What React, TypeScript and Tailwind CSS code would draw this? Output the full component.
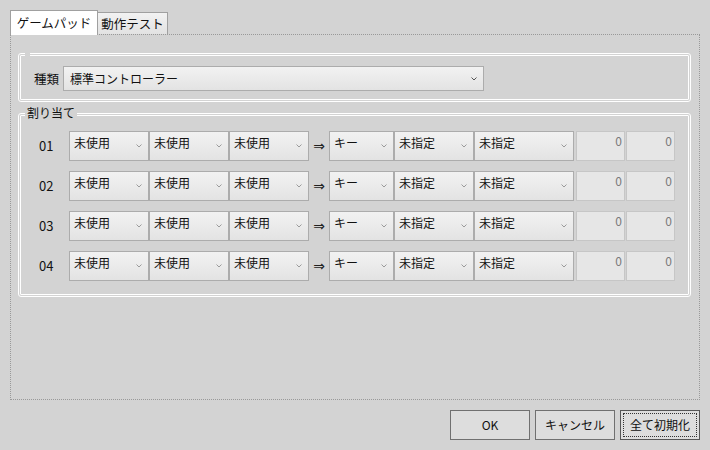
import React from "react";

const FONT = { fontFamily: '"Noto Sans CJK JP", "Noto Sans", sans-serif' };

function Chevron({ dark = false }: { dark?: boolean }) {
  return (
    <svg width="6" height="4" viewBox="0 0 6 4" className="shrink-0">
      <polyline
        points="0.5,0.5 3,3 5.5,0.5"
        fill="none"
        stroke={dark ? "#555555" : "#9a9a9a"}
        strokeWidth="1"
      />
    </svg>
  );
}

function Select({ label, w }: { label: string; w: string }) {
  return (
    <div
      className={`${w} h-[30px] shrink-0 flex items-start justify-between border border-[#acacac] bg-linear-to-b from-[#f2f2f2] to-[#e3e3e3] pl-[4px] pr-[6px]`}
    >
      <span className="pt-[3px] text-[12px] leading-[16px] text-[#111]">{label}</span>
      <span className="self-center">
        <Chevron />
      </span>
    </div>
  );
}

function NumBox() {
  return (
    <div className="w-[49px] h-[30px] shrink-0 ml-[1px] border border-[#c6c6c6] bg-[#e6e6e6] flex justify-end items-start pr-[2px] pt-[1px]">
      <span className="text-[12px] leading-[16px] text-[#7a7a7a]">0</span>
    </div>
  );
}

function Row({ n }: { n: string }) {
  return (
    <div className="flex items-center h-[30px]">
      <div className="w-[30px] text-[13px] leading-[16px] text-[#111]">{n}</div>
      <Select label="未使用" w="w-[80px]" />
      <Select label="未使用" w="w-[80px]" />
      <Select label="未使用" w="w-[80px]" />
      <div
        className="w-[20px] flex justify-center text-[14px] leading-[16px] text-[#222]"
        style={{ fontFamily: '"DejaVu Sans", sans-serif' }}
      >
        ⇒
      </div>
      <Select label="キー" w="w-[65px]" />
      <Select label="未指定" w="w-[80px]" />
      <Select label="未指定" w="w-[100px]" />
      <div className="w-[1px]" />
      <NumBox />
      <NumBox />
    </div>
  );
}

function Button({ label, focused = false }: { label: string; focused?: boolean }) {
  return (
    <div
      className={`w-[80px] h-[30px] border ${focused ? "border-[#555555]" : "border-[#707070]"} bg-[#dddddd] flex items-center justify-center p-[2px]`}
    >
      <div
        className={`w-full h-full flex items-center justify-center border ${focused ? "border-dotted border-[#333333]" : "border-transparent"}`}
      >
        <span className="text-[12px] leading-[16px] text-[#111]">{label}</span>
      </div>
    </div>
  );
}

export default function App() {
  return (
    <div className="w-[710px] h-[450px] bg-[#d3d3d3] flex flex-col overflow-hidden" style={FONT}>
      <div className="flex items-end pt-[10px] pl-[10px] h-[34px]">
        <div className="relative z-10 w-[88px] h-[25px] -mb-px bg-white border border-b-0 border-[#a0a0a0] flex items-center justify-center">
          <span className="text-[12.5px] leading-[16px] text-[#111]">ゲームパッド</span>
        </div>
        <div className="w-[70px] h-[22px] border border-l-0 border-b-0 border-[#a0a0a0] bg-linear-to-b from-[#f2f2f2] to-[#e2e2e2] flex items-center justify-center">
          <span className="text-[12.5px] leading-[16px] text-[#111]">動作テスト</span>
        </div>
      </div>
      <div className="ml-[10px] w-[690px] h-[366px] border border-dotted border-[#999999] pt-[18px] pl-[7px]">
        <div className="relative w-[673px] h-[49px] border-[3px] border-double border-white rounded-[3px] pt-[10px] pl-[13px] flex items-start">
          <span className="absolute left-[4px] top-[-3px] w-[5px] h-[3px] bg-[#d3d3d3]" />
          <div className="flex items-center">
            <span className="text-[12.5px] leading-[16px] text-[#111] mr-[4px]">種類</span>
            <div className="w-[421px] h-[25px] border border-[#acacac] bg-linear-to-b from-[#f2f2f2] to-[#e3e3e3] flex items-center justify-between pl-[6px] pr-[6px]">
              <span className="text-[12px] leading-[16px] text-[#111]">標準コントローラー</span>
              <Chevron dark />
            </div>
          </div>
        </div>
        <div className="relative mt-[11px] w-[673px] h-[184px] border-[3px] border-double border-white rounded-[3px] pt-[15px] pl-[18px] flex flex-col gap-[10px]">
          <span className="absolute left-[4px] top-[-11px] px-[2px] bg-[#d3d3d3] text-[12px] leading-[16px] text-[#111]">
            割り当て
          </span>
          <Row n="01" />
          <Row n="02" />
          <Row n="03" />
          <Row n="04" />
        </div>
      </div>
      <div className="flex justify-end gap-[5px] pr-[10px] mt-[10px]">
        <Button label="OK" />
        <Button label="キャンセル" />
        <Button label="全て初期化" focused />
      </div>
    </div>
  );
}
